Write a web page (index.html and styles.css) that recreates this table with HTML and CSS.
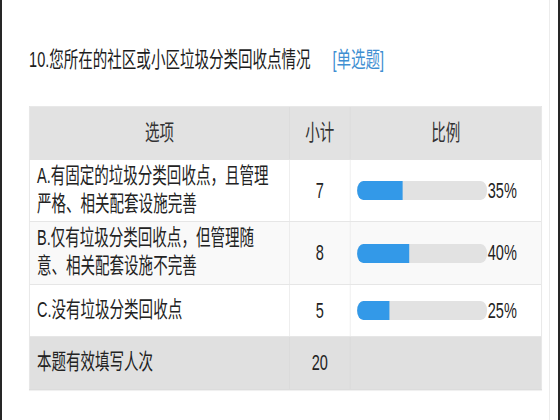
FILE: index.html
```html
<!DOCTYPE html>
<html lang="zh-CN">
<head>
<meta charset="utf-8">
<link rel="stylesheet" href="styles.css">
</head>
<body>
<div class="frame">
  <div class="stage">
    <div class="title">10.您所在的社区或小区垃圾分类回收点情况<span class="tag">[单选题]</span></div>
    <div class="table">
      <div class="row head">
        <div class="cell center">选项</div>
        <div class="cell center">小计</div>
        <div class="cell center last">比例</div>
      </div>
      <div class="row r-a">
        <div class="cell opt">A.有固定的垃圾分类回收点，且管理<br>严格、相关配套设施完善</div>
        <div class="cell center">7</div>
        <div class="cell last"><div class="bar"><div class="fill" style="width:35%"></div></div><span class="pct">35%</span></div>
      </div>
      <div class="row r-b">
        <div class="cell opt">B.仅有垃圾分类回收点，但管理随<br>意、相关配套设施不完善</div>
        <div class="cell center">8</div>
        <div class="cell last"><div class="bar"><div class="fill" style="width:40%"></div></div><span class="pct">40%</span></div>
      </div>
      <div class="row r-c">
        <div class="cell opt">C.没有垃圾分类回收点</div>
        <div class="cell center">5</div>
        <div class="cell last"><div class="bar"><div class="fill" style="width:25%"></div></div><span class="pct">25%</span></div>
      </div>
      <div class="row total">
        <div class="cell opt">本题有效填写人次</div>
        <div class="cell center">20</div>
        <div class="cell last"></div>
      </div>
    </div>
  </div>
</div>
</body>
</html>
```

FILE: styles.css
```css
html {
  width: 560px;
  height: 420px;
  overflow: hidden;
  background: #fff;
}
html, body {
  margin: 0;
  padding: 0;
}
body {
  width: 560px;
  height: 420px;
  box-sizing: border-box;
  border-left: 2px solid #262626;
  border-right: 2px solid #262626;
  font-family: "Liberation Sans", "Noto Sans CJK SC", sans-serif;
  color: #222;
  overflow: hidden;
}
.frame {
  width: 548px;
  height: 420px;
  box-sizing: border-box;
  border-right: 1px solid #ececec;
  overflow: hidden;
}
.stage {
  width: 818px;
  transform: scaleX(0.66);
  transform-origin: 0 0;
}
.title {
  margin: 46px 0 32px 41px;
  font-size: 22px;
  line-height: 28px;
  color: #1c1c1c;
  white-space: nowrap;
}
.tag {
  margin-left: 33px;
  color: #3f8fd2;
}
.table {
  margin-left: 41px;
  width: 777px;
  border: 1px solid #dcdcdc;
  border-top-color: #e8e8e8;
  box-sizing: border-box;
  overflow: hidden;
  box-shadow: 0 1px 1px rgba(0,0,0,0.06);
}
.row {
  display: grid;
  grid-template-columns: 394px 92px 1fr;
  box-sizing: border-box;
  border-bottom: 1px solid #e6e6e6;
  font-size: 22px;
  line-height: 28px;
}
.row.total { border-bottom: none; }
.head { height: 53px; background: #e2e2e2; color: #333; border-bottom-color: #e2e2e2; }
.r-a { height: 62px; background: #fff; }
.r-b { height: 63px; background: #f9f9f9; }
.r-c { height: 52px; background: #fff; }
.total { height: 52px; background: #e0e0e0; }
.cell {
  display: flex;
  align-items: center;
  box-sizing: border-box;
  border-right: 1px solid #e6e6e6;
  white-space: nowrap;
  min-width: 0;
}
.head .cell { border-right-color: #d9d9d9; }
.total .cell { border-right-color: #d8d8d8; }
.cell.last { border-right: none; }
.center { justify-content: center; }
.opt { padding: 0 0 2px 11px; }
.bar {
  margin-left: 10px;
  width: 197px;
  height: 19px;
  border-radius: 10px;
  background: #e2e2e2;
  overflow: hidden;
  flex: none;
}
.fill {
  height: 100%;
  background: #3399e8;
}
.pct {
  margin-left: 1px;
  color: #222;
}
```
